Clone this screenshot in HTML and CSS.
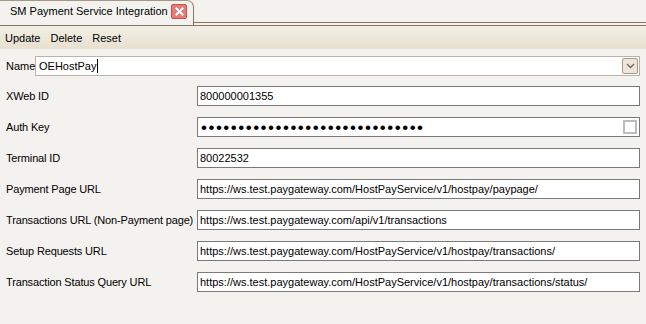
FILE: index.html
```html
<!DOCTYPE html>
<html lang="en">
<head>
    <meta charset="utf-8">
    <title>SM Payment Service Integration</title>
    <link rel="stylesheet" href="styles.css">
</head>
<body>
    <div class="tabs">
        <div class="tab">
            <span class="tab-title">SM Payment Service Integration</span>
            <span class="tab-close">
                <svg width="9" height="9" viewBox="0 0 9 9"><path d="M1.5 1.5L7.5 7.5M7.5 1.5L1.5 7.5" stroke="#fff" stroke-width="2" stroke-linecap="square"/></svg>
            </span>
        </div>
        <div class="tab-fill"></div>
    </div>
    <div class="toolbar">
        <span class="tool">Update</span>
        <span class="tool">Delete</span>
        <span class="tool">Reset</span>
    </div>
    <div class="form">
        <div class="name-row">
            <label class="lbl-name">Name</label>
            <div class="combo">
                <span class="combo-text">OEHostPay</span><span class="caret"></span>
                <span class="combo-btn">
                    <svg width="9" height="6" viewBox="0 0 9 6"><path d="M1 1L4.5 4.5L8 1" fill="none" stroke="#7d6a5a" stroke-width="1.4"/></svg>
                </span>
            </div>
        </div>
        <div class="fields">
            <label class="lbl">XWeb ID</label>
            <div class="field">800000001355</div>

            <label class="lbl">Auth Key</label>
            <div class="field field-pw">
                <span class="dots">••••••••••••••••••••••••••••••</span>
                <span class="pw-box"></span>
            </div>

            <label class="lbl">Terminal ID</label>
            <div class="field">80022532</div>

            <label class="lbl">Payment Page URL</label>
            <div class="field">https://ws.test.paygateway.com/HostPayService/v1/hostpay/paypage/</div>

            <label class="lbl">Transactions URL (Non-Payment page)</label>
            <div class="field">https://ws.test.paygateway.com/api/v1/transactions</div>

            <label class="lbl">Setup Requests URL</label>
            <div class="field">https://ws.test.paygateway.com/HostPayService/v1/hostpay/transactions/</div>

            <label class="lbl">Transaction Status Query URL</label>
            <div class="field">https://ws.test.paygateway.com/HostPayService/v1/hostpay/transactions/status/</div>
        </div>
    </div>
</body>
</html>
```
FILE: styles.css
```css
*{margin:0;padding:0;box-sizing:border-box;}
body{width:646px;height:324px;overflow:hidden;background:#f4f2ee;color:#000;font-family:"Liberation Sans",Arial,sans-serif;font-size:11px;line-height:13px;}

/* tab strip */
.tabs{display:flex;height:25px;}
.tab{display:flex;align-items:center;width:194px;height:25px;padding-left:10px;border-top:1px solid #a69684;border-right:1px solid #8b7665;border-top-right-radius:7px;}
.tab-title{padding-bottom:4px;}
.tab-close{display:flex;align-items:center;justify-content:center;width:16px;height:15px;margin:0 6px 3px auto;background:#e57a76;border:1px solid #c9524f;border-radius:2px;}
.tab-fill{flex:1;height:23px;border-bottom:1px solid #8b7665;}

/* toolbar */
.toolbar{display:flex;gap:10px;height:24px;padding:6px 0 0 5px;border-top:1px solid #8b7665;background:linear-gradient(#f3efe5,#e7e0d0);}
.tool{line-height:13px;}

/* form */
.form{padding:7px 6px 0 6px;}
.name-row{display:flex;align-items:center;gap:4px;}
.lbl-name{width:25px;}
.combo{display:flex;align-items:center;flex:1;height:20px;padding-left:3px;background:#fff;border:1px solid #bfb2a3;}
.caret{width:1px;height:14px;margin-left:1px;background:#000;}
.combo-btn{display:flex;align-items:center;justify-content:center;width:16px;height:16px;margin-left:auto;margin-right:1px;background:#ede6d8;border:1px solid #a8988a;border-radius:2px;}

.fields{display:grid;grid-template-columns:191px 443px;row-gap:11px;margin-top:10px;}
.lbl{display:flex;align-items:center;height:20px;white-space:nowrap;letter-spacing:-0.15px;}
.field{display:flex;align-items:center;height:20px;padding-left:2px;background:#fff;border:1px solid #7a7a7a;white-space:nowrap;overflow:hidden;}
.field-pw{justify-content:space-between;}
.dots{font-size:17px;letter-spacing:1.5px;padding-left:1px;}
.pw-box{width:14px;height:14px;margin-right:2px;background:#fff;border:2px solid #bdbdbd;}
```
